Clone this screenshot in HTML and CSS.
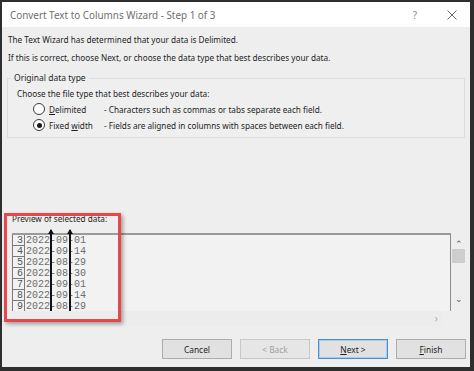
FILE: index.html
```html
<!DOCTYPE html>
<html lang="en">
<head>
    <meta charset="UTF-8">
    <title>Convert Text to Columns Wizard - Step 1 of 3</title>
    <link rel="stylesheet" href="styles.css">
</head>
<body>
    <div class="dialog">
        <div class="titlebar">
            <span class="title">Convert Text to Columns Wizard - Step 1 of 3</span>
            <span class="help">?</span>
            <svg class="close" width="10" height="10" viewBox="0 0 10 10">
                <path d="M0.5 0.5 L9.5 9.5 M9.5 0.5 L0.5 9.5" stroke="#666" stroke-width="1" fill="none"/>
            </svg>
        </div>

        <div class="content">
            <p class="intro">The Text Wizard has determined that your data is Delimited.</p>
            <p class="intro">If this is correct, choose Next, or choose the data type that best describes your data.</p>

            <fieldset class="group">
                <legend>Original data type</legend>
                <div class="choose">Choose the file type that best describes your data:</div>
                <div class="option">
                    <span class="radio"></span>
                    <span class="opt-label"><u>D</u>elimited</span>
                    <span class="opt-desc">- Characters such as commas or tabs separate each field.</span>
                </div>
                <div class="option">
                    <span class="radio checked"></span>
                    <span class="opt-label">Fixed <u>w</u>idth</span>
                    <span class="opt-desc">- Fields are aligned in columns with spaces between each field.</span>
                </div>
            </fieldset>

            <div class="preview-section">
                <div class="preview-label">Preview of selected data:</div>
                <div class="preview">
                    <div class="preview-main">
                        <div class="rows">
                            <div class="row"><span class="num">3</span><span class="data">2022-09-01</span></div>
                            <div class="row"><span class="num">4</span><span class="data">2022-09-14</span></div>
                            <div class="row"><span class="num">5</span><span class="data">2022-08-29</span></div>
                            <div class="row"><span class="num">6</span><span class="data">2022-08-30</span></div>
                            <div class="row"><span class="num">7</span><span class="data">2022-09-01</span></div>
                            <div class="row"><span class="num">8</span><span class="data">2022-09-14</span></div>
                            <div class="row"><span class="num">9</span><span class="data">2022-08-29</span></div>
                        </div>
                    </div>
                    <div class="vscroll">
                        <span class="arrow">&#8963;</span>
                        <span class="thumb"></span>
                        <span class="arrow down">&#8964;</span>
                    </div>
                </div>
                <div class="hscroll"><span class="arrow">&#8250;</span></div>

                <div class="break first"></div>
                <div class="break second"></div>
                <div class="highlight"></div>
            </div>

            <div class="buttons">
                <button>Cancel</button>
                <button class="disabled">&lt; Back</button>
                <button class="default"><u>N</u>ext &gt;</button>
                <button><u>F</u>inish</button>
            </div>
        </div>
    </div>
</body>
</html>
```

FILE: styles.css
```css
body {
    margin: 0;
    background-color: #2e2e2e;
    font-family: "Noto Sans", "Open Sans", sans-serif;
    font-size: 8.2px;
    color: #1e1e1e;
}
.dialog {
    margin: 2px 0 0 2px;
    width: 468px;
    height: 365px;
    background-color: #eeeeee;
}
.titlebar {
    height: 25px;
    background-color: #ffffff;
    display: flex;
    align-items: center;
    padding-left: 8px;
}
.title {
    font-size: 9.9px;
    color: #6e6e6e;
    flex: 1;
}
.help {
    font-size: 10px;
    color: #8a8a8a;
    margin-right: 30px;
}
.close {
    margin-right: 13px;
}
.content {
    padding: 4px 4px 0 5px;
}
.intro {
    margin: 0;
    padding-left: 1px;
    line-height: 18px;
}
.group {
    margin: 4px 1px 0 0;
    padding: 2px 0 4px 0;
    border: 1px solid #dcdcdc;
    background-color: #efefef;
}
.group legend {
    margin-left: 3px;
    padding: 0 3px;
    line-height: 14px;
    font-size: 8.5px;
}
.choose {
    padding-left: 9px;
    line-height: 14px;
}
.option {
    display: flex;
    align-items: center;
    height: 16px;
    padding-left: 25px;
}
.radio {
    width: 10px;
    height: 10px;
    border: 1px solid #3a3a3a;
    border-radius: 50%;
    background-color: #ffffff;
    display: flex;
    align-items: center;
    justify-content: center;
    margin-right: 4px;
}
.radio.checked::after {
    content: "";
    width: 5px;
    height: 5px;
    border-radius: 50%;
    background-color: #1a1a1a;
}
.opt-label {
    width: 55px;
}
.preview-section {
    position: relative;
    margin: 74px 0 0 5px;
}
.preview-label {
    line-height: 14px;
}
.preview {
    display: flex;
    margin-top: 7px;
    height: 78px;
}
.preview-main {
    flex: 1;
    border-top: 2px solid #9a9a9a;
    border-right: 1px solid #8c8c8c;
    background-color: #f2f2f2;
    overflow: hidden;
}
.rows {
    font-family: "Liberation Mono", monospace;
    font-size: 10px;
    color: #6e6e6e;
}
.row {
    display: flex;
    height: 11px;
    line-height: 11px;
}
.num {
    width: 10px;
    text-align: right;
    padding-right: 1px;
    border-left: 1px solid #7a7a7a;
    border-right: 1px solid #7a7a7a;
    border-bottom: 1px solid #7a7a7a;
    box-sizing: content-box;
    height: 10px;
    color: #555555;
}
.data {
    padding-left: 1px;
}
.vscroll {
    width: 15px;
    display: flex;
    flex-direction: column;
    align-items: center;
    color: #555555;
    font-size: 9px;
}
.vscroll .arrow {
    height: 16px;
    line-height: 22px;
}
.vscroll .arrow.down {
    margin-top: auto;
    line-height: 8px;
}
.thumb {
    width: 13px;
    height: 14px;
    background-color: #cdcdcd;
}
.hscroll {
    height: 15px;
    width: 431px;
    background-color: #ececec;
    text-align: right;
    color: #b0b0b0;
    font-size: 11px;
    line-height: 14px;
}
.hscroll .arrow {
    margin-right: 5px;
}
.break {
    position: absolute;
    top: 18px;
    width: 2px;
    height: 81px;
    background-color: #111111;
}
.break::before {
    content: "";
    position: absolute;
    top: -1px;
    left: -2px;
    border-left: 3px solid transparent;
    border-right: 3px solid transparent;
    border-bottom: 5px solid #111111;
}
.break.first {
    left: 38px;
}
.break.second {
    left: 57px;
}
.highlight {
    position: absolute;
    left: -8px;
    top: 1px;
    width: 111px;
    height: 103px;
    border: 3px solid #e5474a;
    box-shadow: 2px 2px 4px rgba(0, 0, 0, 0.35);
}
.buttons {
    display: flex;
    justify-content: flex-end;
    gap: 8px;
    margin-top: 13px;
}
button {
    width: 70px;
    height: 20px;
    padding: 0;
    font-family: "Noto Sans", "Open Sans", sans-serif;
    font-size: 8.4px;
    color: #1e1e1e;
    background-color: #e1e1e1;
    border: 1px solid #adadad;
}
button.disabled {
    color: #a0a0a0;
    border-color: #c8c8c8;
    background-color: #e6e6e6;
}
button.default {
    border: 1px solid #4a8fd0;
    box-shadow: inset 0 0 0 1px #a9cbed;
}
```
